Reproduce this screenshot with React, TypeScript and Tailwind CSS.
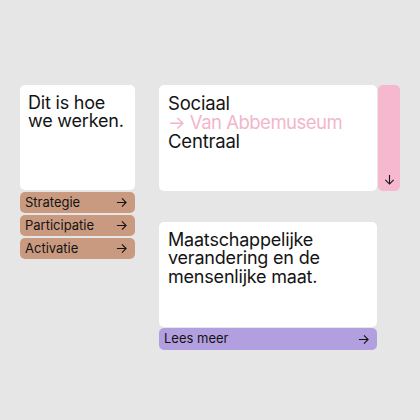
import React from "react";

function Arrow({ dir = "right", className = "" }: { dir?: "right" | "down"; className?: string }) {
  return (
    <svg viewBox="0 0 12 12" className={className} fill="none" stroke="currentColor" strokeWidth="1.2">
      {dir === "right" ? (
        <path d="M1 6h10M6.5 1.5 11 6l-4.5 4.5" />
      ) : (
        <path d="M6 1v10M1.5 6.5 6 11l4.5-4.5" />
      )}
    </svg>
  );
}

const links = ["Strategie", "Participatie", "Activatie"];

export default function App() {
  return (
    <div
      className="w-[420px] h-[420px] bg-[#e6e6e6] text-[#141414] flex gap-[24px] pl-[20px] pt-[85px]"
      style={{ fontFamily: "Inter, 'Liberation Sans', sans-serif" }}
    >
      {/* left column */}
      <div className="w-[115px] flex flex-col gap-[2px]">
        <div className="bg-white rounded-[5px] h-[105px] px-[8px] pt-[9px]">
          <p className="text-[18px] leading-[18px] tracking-[-0.2px]">Dit is hoe we werken.</p>
        </div>
        {links.map((l) => (
          <div
            key={l}
            className="bg-[#c99a7f] rounded-[5px] h-[21px] flex items-center justify-between pl-[5px] pr-[8px] text-[13px]"
          >
            <span>{l}</span>
            <Arrow className="w-[11px] h-[11px]" />
          </div>
        ))}
      </div>

      {/* right column */}
      <div className="w-[241px] flex flex-col gap-[31px]">
        <div className="flex gap-[1px] h-[106px]">
          <div className="bg-white rounded-[5px] w-[218px] px-[9px] pt-[9px]">
            <p className="text-[18.5px] leading-[19px] tracking-[-0.2px]">
              Sociaal
              <br />
              <span className="text-[#f2b6cb] tracking-[-0.5px]">→ Van Abbemuseum</span>
              <br />
              Centraal
            </p>
          </div>
          <div className="bg-[#f6b8cf] rounded-[5px] flex-1 flex items-end justify-center pb-[6px]">
            <Arrow dir="down" className="w-[11px] h-[11px]" />
          </div>
        </div>

        <div className="w-[218px] flex flex-col gap-[1px]">
          <div className="bg-white rounded-[5px] h-[105px] px-[9px] pt-[9px]">
            <p className="text-[18px] leading-[18.3px] tracking-[-0.2px]">
              Maatschappelijke verandering en de mensenlijke maat.
            </p>
          </div>
          <div className="bg-[#b29fdf] rounded-[5px] h-[22px] flex items-center justify-between pl-[5px] pr-[8px] text-[13px]">
            <span>Lees meer</span>
            <Arrow className="w-[11px] h-[11px]" />
          </div>
        </div>
      </div>
    </div>
  );
}
